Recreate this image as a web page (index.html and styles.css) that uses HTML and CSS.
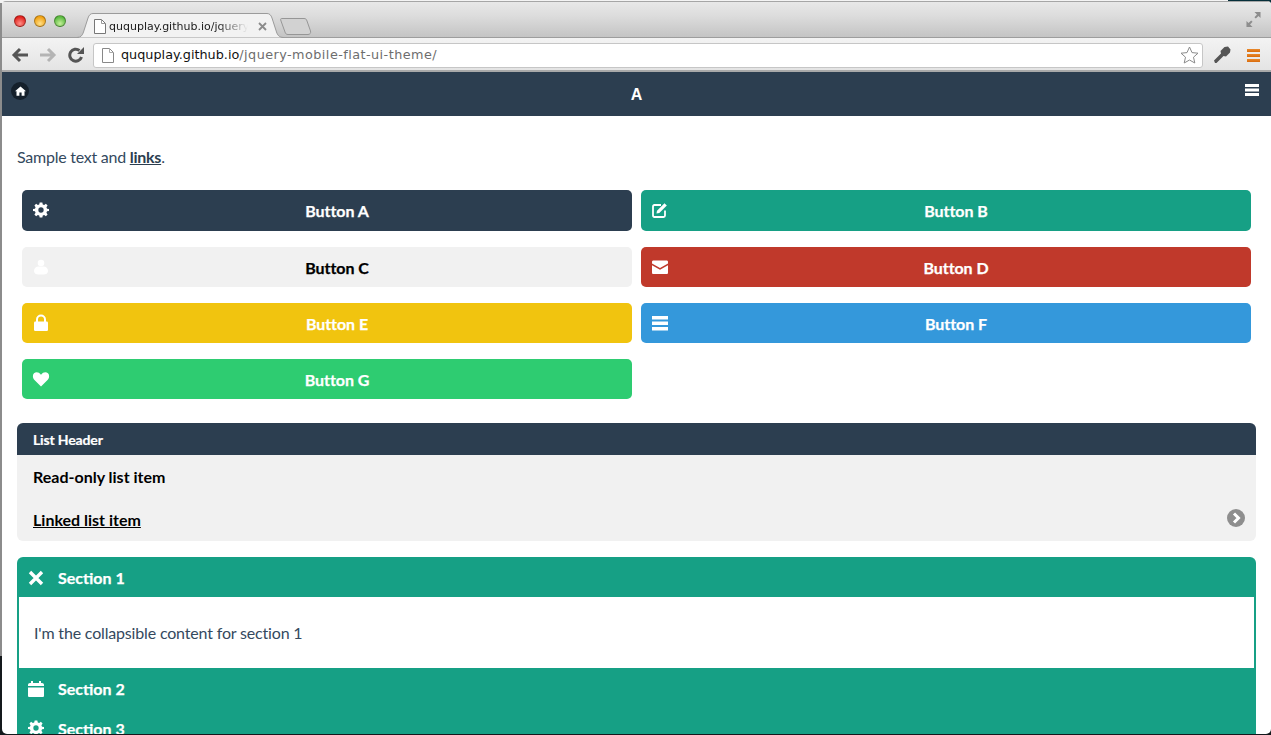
FILE: index.html
```html
<!DOCTYPE html>
<html lang="en">
<head>
<meta charset="utf-8">
<title>jQuery Mobile Flat UI Theme</title>
<link rel="stylesheet" href="styles.css">
</head>
<body>
<div class="window">
  <div class="tabstrip">
    <div class="lights">
      <span class="light light-red"></span>
      <span class="light light-yellow"></span>
      <span class="light light-green"></span>
    </div>
    <div class="tab">
      <svg class="tab-shape" width="208" height="25" viewBox="0 0 208 25"><path d="M0 24.500C4 24.500 5.500 22 6.500 19L11 5C12 2 13.500 .5 16 .5H190C192.500 .5 194 2 195 5L199.500 19C200.500 22 202 24.500 207 24.500" fill="#f2f2f2" stroke="#9b9b9b"/></svg>
      <svg class="page-icon" width="12" height="15" viewBox="0 0 12 15"><path d="M.5.5H7.500L11.500 4.500V14.500H.5Z" fill="#fff" stroke="#777"/><path d="M7.500.5V4.500H11.500" fill="none" stroke="#999"/></svg>
      <span class="tab-title">ququplay.github.io/jquery-mobile</span>
      <svg class="tab-close" width="9" height="9" viewBox="0 0 9 9"><path d="M1 1L8 8M8 1L1 8" stroke="#8b8b8b" stroke-width="1.800"/></svg>
    </div>
    <svg class="new-tab" width="32" height="17" viewBox="0 0 32 17"><path d="M1.500.5H24C26 .5 26.500 1.500 27 3L30.500 13C31 15 30 16.500 28 16.500H8C6 16.500 5.500 15.500 5 14L1 3C.5 1.500.5.5 1.500.5Z" fill="#d2d2d2" stroke="#969696"/></svg>
    <svg class="fullscreen" width="15" height="15" viewBox="0 0 16 16"><path d="M9 0H15.500V6.500L13.300 4.300L10.500 7L9 5.500L11.700 2.700ZM7 16H.5V9.500L2.700 11.700L5.500 9L7 10.500L4.300 13.300Z" fill="#8d8d8d"/></svg>
  </div>
  <div class="toolbar">
    <svg class="nav-icon" width="18" height="16" viewBox="0 0 18 16"><path d="M17 8H4M9 2L3 8L9 14" fill="none" stroke="#555" stroke-width="3"/></svg>
    <svg class="nav-icon" width="18" height="16" viewBox="0 0 18 16"><path d="M1 8H14M9 2L15 8L9 14" fill="none" stroke="#b4b4b4" stroke-width="3"/></svg>
    <svg class="nav-icon" width="16" height="16" viewBox="0 0 16 16"><path d="M13.500 10A6 6 0 1 1 11.500 3.500" fill="none" stroke="#555" stroke-width="3"/><path d="M9 7H16V0Z" fill="#555"/></svg>
    <div class="omnibox">
      <svg class="page-icon-large" width="12" height="15" viewBox="0 0 12 15"><path d="M.5.5H7.500L11.500 4.500V14.500H.5Z" fill="#fff" stroke="#888"/><path d="M7.500.5V4.500H11.500" fill="none" stroke="#aaa"/></svg>
      <span class="url"><span class="url-host">ququplay.github.io</span><span class="url-path">/jquery-mobile-flat-ui-theme/</span></span>
      <svg class="star" width="19" height="18" viewBox="0 0 19 18"><path d="M9.500 1L12 6.600L18 7.200L13.500 11.200L14.800 17L9.500 14L4.200 17L5.500 11.200L1 7.200L7 6.600Z" fill="#fff" stroke="#8a8a8a"/></svg>
    </div>
    <svg class="wrench" width="17" height="18" viewBox="0 0 17 18"><path d="M1 17L0 14.500L7 7.500L6.500 5L10.500 1L14 .5L16.500 3.500L16 6.500L12 10.500L9.500 10L2.500 17Z" fill="#555"/></svg>
    <span class="menu-icon"><i></i><i></i><i></i></span>
  </div>
  <header class="app-header">
    <span class="home-button">
      <svg width="11" height="10" viewBox="0 0 11 10"><path d="M5.500 .5L11 5.200H9.500V9.800H6.600V6.500H4.400V9.800H1.500V5.200H0Z" fill="#fff"/></svg>
    </span>
    <h1 class="app-title">A</h1>
    <svg class="header-menu" width="14" height="12" viewBox="0 0 14 12"><path d="M0 0H14V3H0ZM0 4.500H14V7.500H0ZM0 9H14V12H0Z" fill="#fff"/></svg>
  </header>
  <main class="content">
    <p class="sample">Sample text and <a href="#">links</a>.</p>
    <div class="buttons">
      <a class="btn btn-a" href="#">
        <svg class="btn-icon icon-gear" width="16" height="16" viewBox="0 0 18 18"><use href="#gear"/></svg>Button A</a>
      <a class="btn btn-b" href="#">
        <svg class="btn-icon" width="18" height="18" viewBox="0 0 18 18"><path d="M14 9.500V14.500C14 15.500 13.500 16 12.500 16H3.500C2.500 16 2 15.500 2 14.500V5.500C2 4.500 2.500 4 3.500 4H10" fill="none" stroke="#fff" stroke-width="1.800"/><path d="M6 9.800L13.500 2.300L15.800 4.600L8.300 12.100L5.500 12.600Z" fill="#fff"/></svg>Button B</a>
      <a class="btn btn-c" href="#">
        <svg class="btn-icon" width="18" height="18" viewBox="0 0 18 18"><circle cx="9" cy="5" r="3.300" fill="#fff"/><path d="M2 13C2 10 4 8.500 6.500 8.500H11.500C14 8.500 16 10 16 13C16 15.500 14 16.500 11.500 16.500H6.500C4 16.500 2 15.500 2 13Z" fill="#fff"/></svg>Button C</a>
      <a class="btn btn-d" href="#">
        <svg class="btn-icon" width="18" height="18" viewBox="0 0 18 18"><path d="M1 4C1 3 1.500 2.500 2.500 2.500H15.500C16.500 2.500 17 3 17 4V5.500L9 10L1 5.500ZM1 7.300L9 11.800L17 7.300V14.500C17 15.500 16.500 16 15.500 16H2.500C1.500 16 1 15.500 1 14.500Z" fill="#fff"/></svg>Button D</a>
      <a class="btn btn-e" href="#">
        <svg class="btn-icon" width="18" height="18" viewBox="0 0 18 18"><path d="M5 8V5.500A4 4 0 0 1 13 5.500V8" fill="none" stroke="#fff" stroke-width="2"/><rect x="2" y="7.500" width="14" height="9.500" rx="1.200" fill="#fff"/></svg>Button E</a>
      <a class="btn btn-f" href="#">
        <svg class="btn-icon" width="18" height="18" viewBox="0 0 18 18"><path d="M1 2H17V5.500H1ZM1 7.500H17V11H1ZM1 13H17V16.500H1Z" fill="#fff"/></svg>Button F</a>
      <a class="btn btn-g" href="#">
        <svg class="btn-icon" width="18" height="18" viewBox="0 0 18 18"><path d="M9 16.500L2 9.500C.5 8 .5 4.500 2 3.300C4 1.500 7 2 9 4.700C11 2 14 1.500 16 3.300C17.500 4.500 17.500 8 16 9.500Z" fill="#fff"/></svg>Button G</a>
    </div>
    <section class="list">
      <div class="list-header">List Header</div>
      <div class="list-item">Read-only list item</div>
      <a class="list-item list-link" href="#"><span class="list-link-text">Linked list item</span>
        <svg class="list-arrow" width="18" height="18" viewBox="0 0 18 18"><circle cx="9" cy="9" r="9" fill="#8e8e8e"/><path d="M7 4.500L11.500 9L7 13.500" fill="none" stroke="#fff" stroke-width="3"/></svg>
      </a>
    </section>
    <section class="accordion">
      <h3 class="section-head">
        <svg class="section-icon" width="18" height="18" viewBox="0 0 18 18"><path d="M3 3L15 15M15 3L3 15" stroke="#fff" stroke-width="3.400"/></svg>Section 1</h3>
      <div class="section-body">I'm the collapsible content for section 1</div>
      <h3 class="section-head section-after">
        <svg class="section-icon" width="18" height="18" viewBox="0 0 18 18"><path d="M1 5C1 3.800 1.800 3 3 3H4V1H6V3H12V1H14V3H15C16.200 3 17 3.800 17 5V6H1ZM1 7.500H17V15.500C17 16.500 16.500 17 15.500 17H2.500C1.500 17 1 16.500 1 15.500Z" fill="#fff"/></svg>Section 2</h3>
      <h3 class="section-head">
        <svg class="section-icon icon-gear" width="16" height="16" viewBox="0 0 18 18"><use href="#gear"/></svg>Section 3</h3>
    </section>
  </main>
</div>
<svg class="sprites" width="0" height="0" aria-hidden="true"><defs>
  <path id="gear" fill="#fff" fill-rule="evenodd" d="M7.500 1H10.500L11 3.200L12.600 3.900L14.500 2.600L16.400 4.500L15.100 6.400L15.800 8L18 8.500V10.500L15.800 11L15.100 12.600L16.400 14.500L14.500 16.400L12.600 15.100L11 15.800L10.500 18H7.500L7 15.800L5.400 15.100L3.500 16.400L1.600 14.500L2.900 12.600L2.200 11L0 10.500V8.500L2.200 8L2.900 6.400L1.600 4.500L3.500 2.600L5.400 3.900L7 3.200ZM9 6.500A3 3 0 1 0 9 12.500A3 3 0 1 0 9 6.500Z" transform="translate(0 -.5)"/>
</defs></svg>
</body>
</html>
```
FILE: styles.css
```css
* { box-sizing: border-box; }
html, body { margin: 0; height: 735px; overflow: hidden; }
body {
  background:
    linear-gradient(90deg, #f4f4f4 1228px, #062f3a 1228px) 0 0 / 100% 3px no-repeat,
    linear-gradient(#8c8c8c 0, #8c8c8c 656px, #14191c 656px);
  font-family: "Lato", "Liberation Sans", sans-serif;
  color: #34495e;
}
.sprites { display: block; height: 0; }
.window {
  margin: 1px 0 0 2px;
  height: 733px;
  background: #fff;
  border-radius: 4px 4px 5px 5px;
  overflow: hidden;
  display: flex;
  flex-direction: column;
}
.tabstrip {
  position: relative;
  height: 37px;
  flex: none;
  display: flex;
  align-items: flex-start;
  background: linear-gradient(#e8e8e8 0, #dcdcdc 40%, #c4c4c4 100%);
  border-top: 1px solid #a6a6a6;
  border-bottom: 1px solid #9d9d9d;
}
.lights { display: flex; gap: 8px; padding: 13px 0 0 12px; width: 75px; flex: none; }
.light { width: 12px; height: 12px; border-radius: 50%; border: 1px solid rgba(0,0,0,.3); }
.light-red { background: radial-gradient(circle at 50% 75%, #ff8f88, #e0201b 75%); }
.light-yellow { background: radial-gradient(circle at 50% 75%, #ffe08a, #f0a010 75%); }
.light-green { background: radial-gradient(circle at 50% 75%, #c5f09a, #58b83e 75%); }
.tab {
  position: relative;
  width: 208px;
  height: 36px;
  padding: 17px 0 0 17px;
  display: flex;
  align-items: flex-start;
  flex: none;
}
.tab-shape { position: absolute; left: 0; top: 11px; }
.page-icon { position: relative; flex: none; }
.tab-title {
  position: relative;
  font: 11px/14px "DejaVu Sans", sans-serif;
  color: #1a1a1a;
  margin: 1px 0 0 3px;
  width: 139px;
  white-space: nowrap;
  overflow: hidden;
  -webkit-mask-image: linear-gradient(90deg, #000 78%, transparent 100%);
  mask-image: linear-gradient(90deg, #000 78%, transparent 100%);
}
.tab-close { position: relative; margin: 3px 0 0 10px; flex: none; }
.new-tab { margin: 16px 0 0 -5px; flex: none; position: relative; }
.fullscreen { position: absolute; right: 10px; top: 10px; }
.toolbar {
  height: 34px;
  flex: none;
  display: flex;
  align-items: center;
  background: linear-gradient(#f3f3f3, #e4e4e4);
  border-bottom: 2px solid #a9a9a9;
  padding: 2px 11px 0 9px;
}
.nav-icon { flex: none; margin-right: 10px; }
.nav-icon + .nav-icon + .nav-icon { margin-left: 1px; margin-right: 9px; }
.omnibox {
  flex: 1;
  height: 25px;
  display: flex;
  align-items: center;
  background: #fff;
  border: 1px solid #c6c6c6;
  border-radius: 3px;
  padding: 0 3px 0 8px;
  margin-right: 11px;
}
.page-icon-large { flex: none; }
.url {
  flex: 1;
  font: 12.800px/18px "DejaVu Sans", sans-serif;
  margin-left: 7px;
  white-space: nowrap;
}
.url-host { color: #111; }
.url-path { color: #6d6d6d; letter-spacing: .45px; }
.star { flex: none; }
.wrench { flex: none; margin-right: 16px; }
.menu-icon { flex: none; display: flex; flex-direction: column; gap: 2px; width: 13px; }
.menu-icon i { display: block; height: 3px; background: linear-gradient(#e98a2e, #d96b0c); }
.app-header {
  position: relative;
  height: 44px;
  flex: none;
  background: #2c3e50;
  display: flex;
  justify-content: center;
  align-items: center;
  padding-top: 2px;
}
.app-title {
  margin: 0;
  font: 700 16px/20px "Liberation Sans", Arial, sans-serif;
  color: #fff;
}
.home-button {
  position: absolute;
  left: 9px;
  top: 10px;
  width: 18px;
  height: 18px;
  border-radius: 50%;
  background: #15202b;
  display: flex;
  justify-content: center;
  align-items: center;
}
.header-menu { position: absolute; right: 12px; top: 12px; }
.content { flex: 1; padding: 0 15px; overflow: hidden; }
.sample { margin: 0; padding-top: 31px; font-size: 16px; line-height: 19px; height: 74px; letter-spacing: -.25px; }
.sample a { color: #2c3e50; font-weight: 700; }
.buttons {
  display: grid;
  grid-template-columns: 610px 610px;
  grid-template-rows: 41px 40px 40px 40px;
  column-gap: 9px;
  row-gap: 16px;
  margin: 0 5px 24px;
}
.btn {
  position: relative;
  display: flex;
  justify-content: center;
  align-items: center;
  padding-left: 20px;
  border-radius: 5px;
  color: #fff;
  font-weight: 700;
  font-size: 16px;
  text-decoration: none;
  letter-spacing: -.05px;
  -webkit-text-stroke: .25px currentColor;
}
.btn-icon { position: absolute; left: 10px; top: 11px; }
.btn-icon.icon-gear { left: 11px; top: 12px; }
.btn-a { background: #2c3e50; }
.btn-b { background: #16a085; }
.btn-c { background: #f1f1f1; color: #000; }
.btn-d { background: #c0392b; }
.btn-e { background: #f1c40f; }
.btn-f { background: #3498db; }
.btn-g { background: #2ecc71; }
.list { border-radius: 6px; overflow: hidden; background: #f1f1f1; margin-bottom: 16px; }
.list-header {
  height: 32px;
  background: #2c3e50;
  color: #fff;
  font-weight: 700;
  font-size: 14px;
  line-height: 33px;
  padding-left: 16px;
  letter-spacing: -.15px;
  -webkit-text-stroke: .2px currentColor;
}
.list-item {
  display: block;
  height: 43px;
  font-size: 16px;
  font-weight: 700;
  line-height: 44px;
  padding-left: 16px;
  color: #000;
}
.list-link { position: relative; text-decoration: none; }
.list-link-text { text-decoration: underline; }
.list-arrow { position: absolute; right: 11px; top: 11px; }
.accordion { border-radius: 6px 6px 0 0; background: #16a085; padding: 0 2px; height: 178px; overflow: hidden; }
.section-head {
  position: relative;
  height: 40px;
  margin: 0;
  font-size: 16px;
  line-height: 42px;
  font-weight: 700;
  color: #fff;
  padding-left: 39px;
  -webkit-text-stroke: .25px currentColor;
}
.section-after { line-height: 42px; }
.section-icon { position: absolute; left: 8px; top: 12px; }
.section-icon.icon-gear { left: 9px; }
.section-body {
  height: 71px;
  background: #fff;
  padding-left: 15px;
  line-height: 72px;
  font-size: 16px;
  letter-spacing: -.17px;
  color: #34495e;
}
```
